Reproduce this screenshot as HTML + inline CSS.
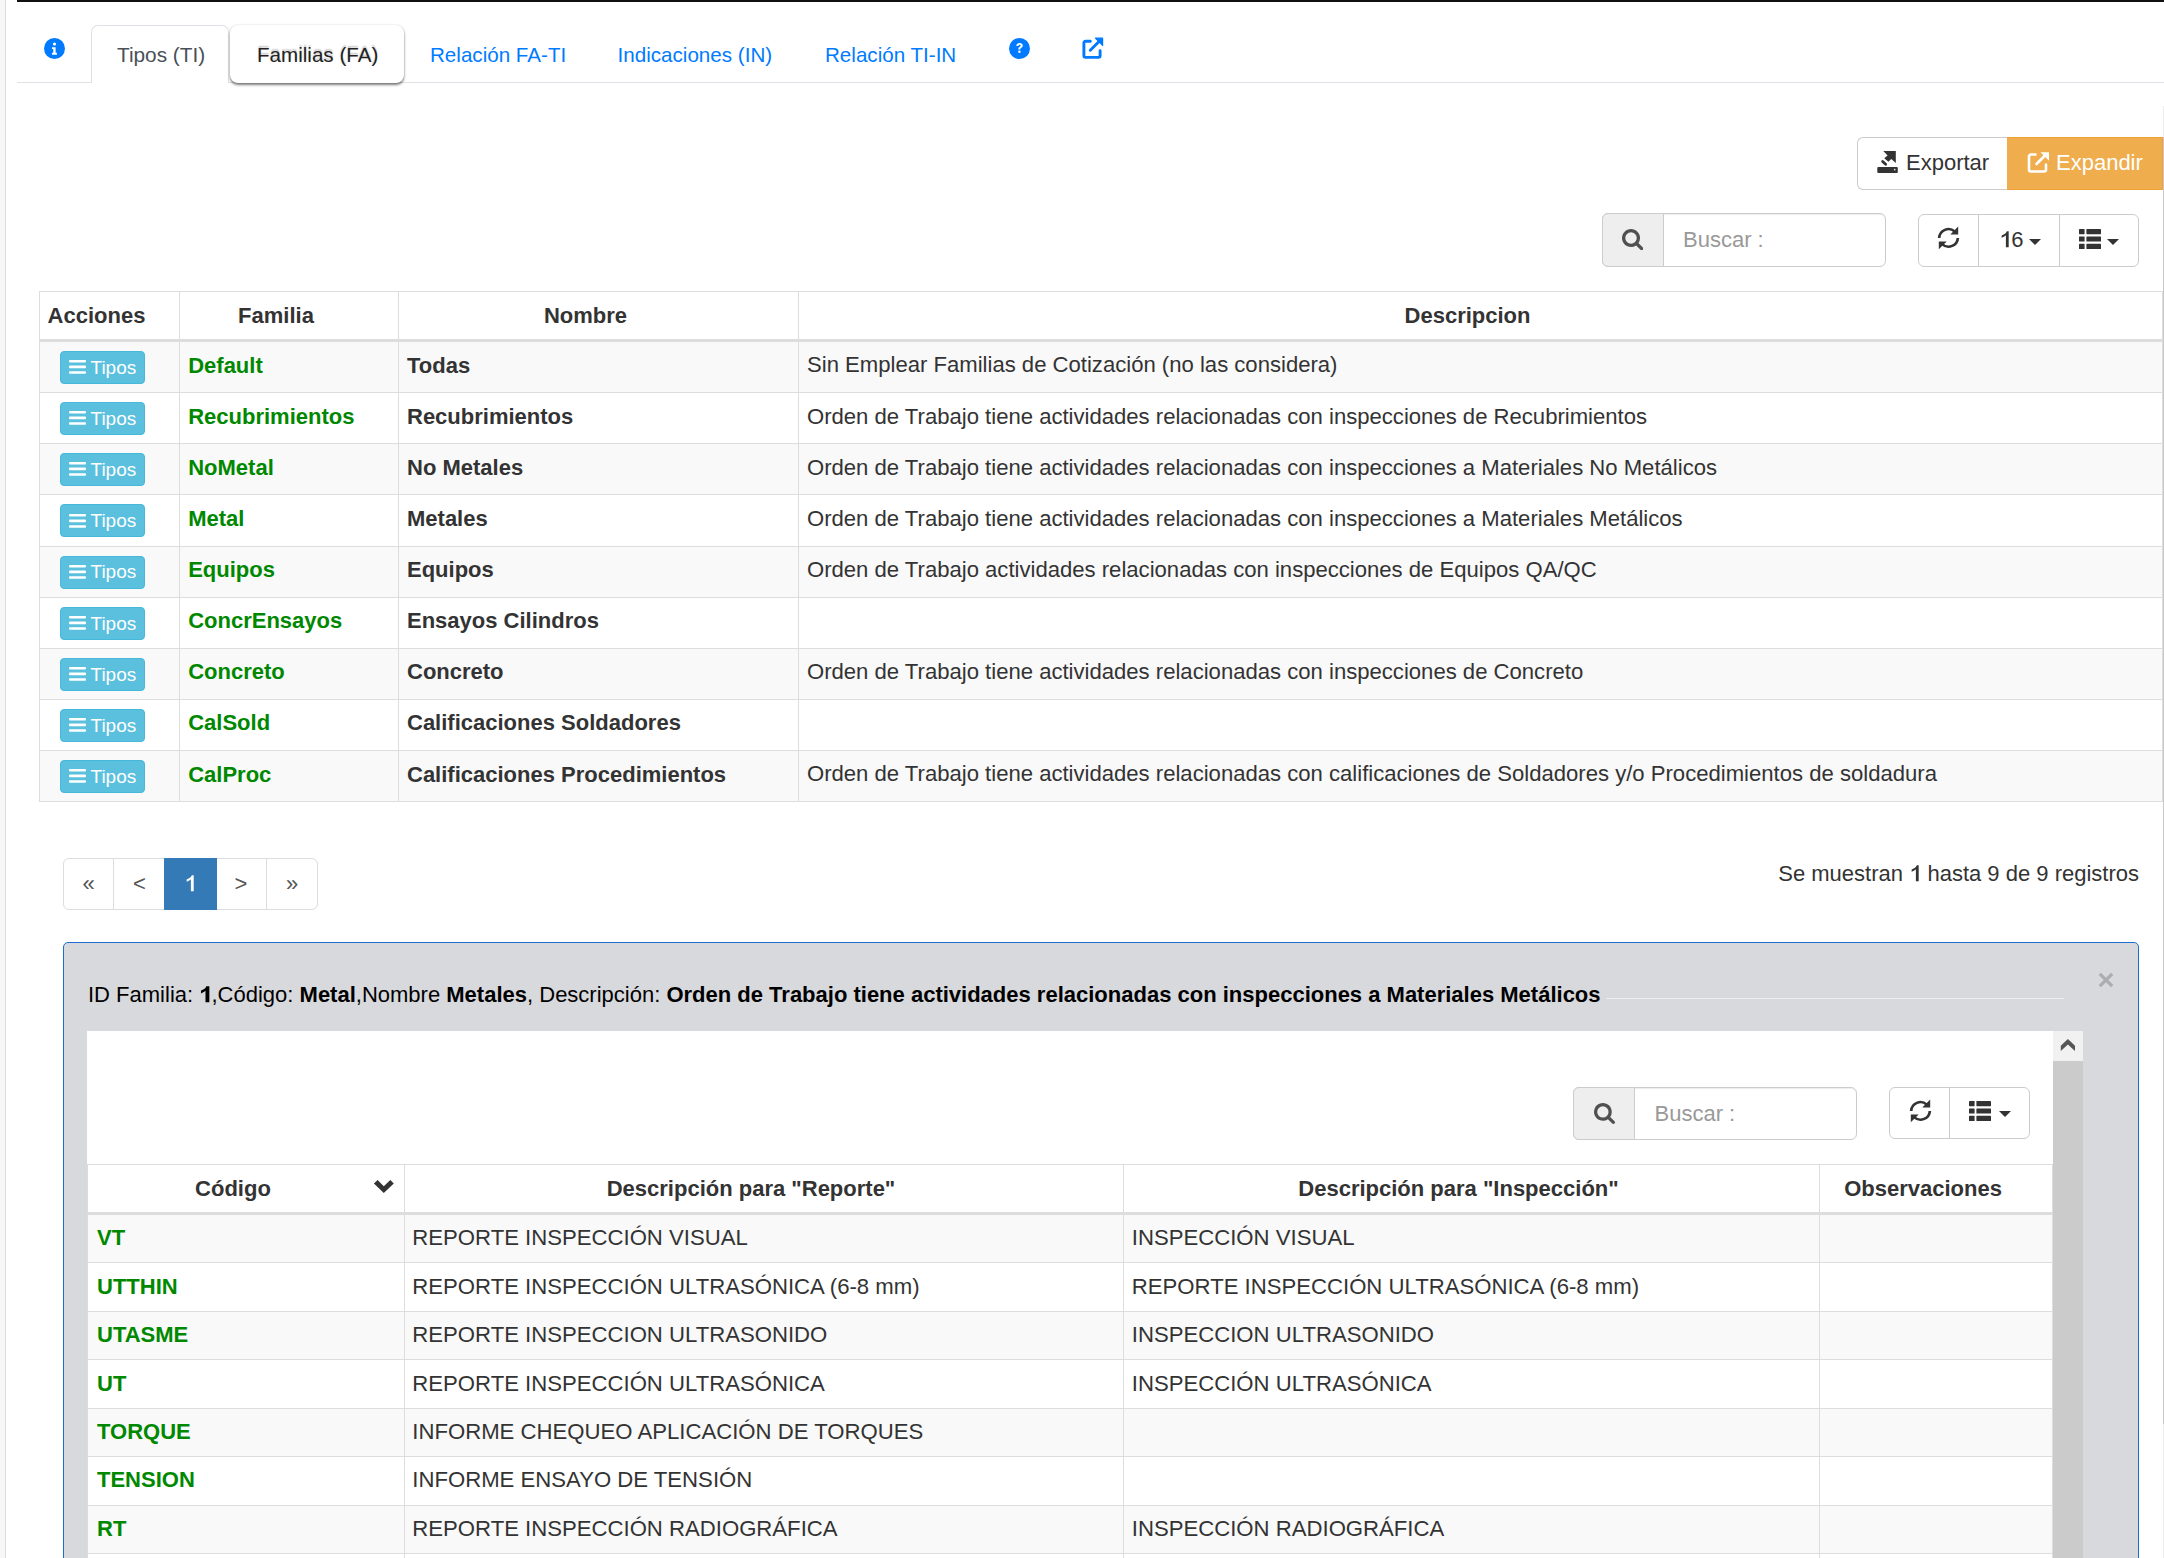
<!DOCTYPE html>
<html><head><meta charset="utf-8"><style>
html,body{margin:0;padding:0;width:2164px;height:1558px;overflow:hidden;background:#fff;position:relative}
body{font-family:"Liberation Sans",sans-serif}
.t{position:absolute;white-space:nowrap;line-height:1}
.r{position:absolute}
</style></head><body>
<div class=r style='left:0px;top:0px;width:5px;height:1558px;background:#f7f7f7'></div>
<div class=r style='left:5px;top:0px;width:1px;height:1558px;background:#dedede'></div>
<div class=r style='left:17px;top:0px;width:2147px;height:2px;background:#111'></div>
<div class=r style='left:2163px;top:106px;width:1px;height:31px;background:#ececec'></div>
<div class=r style='left:2163px;top:137px;width:1px;height:1287px;background:#c8c8c8'></div>
<div class=r style='left:2163px;top:1424px;width:1px;height:134px;background:#ececec'></div>
<div class=r style='left:17px;top:82px;width:2147px;height:1px;background:#dee2e6'></div>
<svg class=r style='left:44px;top:37.5px' width=21 height=21 viewBox='0 0 21 21'><circle cx=10.5 cy=10.5 r=10.5 fill='#007bff'/>
<circle cx=10.5 cy=6 r=1.6 fill='#fff'/><path d='M8 9.2h3.6v5.6h1.3v1.9H8v-1.9h1.3v-3.7H8z' fill='#fff'/></svg>
<div class=r style='left:91px;top:25px;width:138px;height:58px;background:#fff;border:1px solid #dee2e6;border-bottom:none;border-radius:7px 7px 0 0;box-sizing:border-box'></div>
<div class=t style='left:117px;top:44.99px;font-size:20.8px;color:#495057;font-weight:normal;'>Tipos (TI)</div>
<div class=r style='left:230px;top:24.5px;width:174px;height:58px;background:#fff;border-radius:8px;box-shadow:0 2px 2.5px rgba(0,0,0,.5), 0 0 2px rgba(0,0,0,.15)'></div>
<div class=t style='left:257px;top:45.16px;font-size:20.6px;color:#222;font-weight:normal;text-shadow:0 -2px 1.5px rgba(0,0,0,.22)'>Familias (FA)</div>
<div class=t style='left:430px;top:44.86px;font-size:20.6px;color:#007bff;font-weight:normal;'>Relación FA-TI</div>
<div class=t style='left:617.6px;top:44.86px;font-size:20.6px;color:#007bff;font-weight:normal;'>Indicaciones (IN)</div>
<div class=t style='left:825px;top:44.86px;font-size:20.6px;color:#007bff;font-weight:normal;'>Relación TI-IN</div>
<svg class=r style='left:1008.5px;top:37.5px' width=21 height=21 viewBox='0 0 21 21'><circle cx=10.5 cy=10.5 r=10.5 fill='#007bff'/>
<path d='M7.4 7.9c0-1.9 1.4-3 3.2-3s3.2 1.1 3.2 2.7c0 1.4-.9 2-1.8 2.5-.5.3-.7.5-.7 1v.4h-1.9v-.6c0-1.1.6-1.6 1.4-2.1.6-.4.9-.6.9-1.1 0-.6-.5-1-1.1-1s-1.2.4-1.2 1.2z' fill='#fff'/><rect x=9.3 y=12.6 width=2.2 height=2.2 fill='#fff'/></svg>
<svg class=r style='left:1082px;top:37.5px;overflow:visible' width=21 height=21 viewBox='0 0 21 21'>
<path d='M8.3 3.2H3.5a1.6 1.6 0 0 0-1.6 1.6v13a1.6 1.6 0 0 0 1.6 1.6h13a1.6 1.6 0 0 0 1.6-1.6V12.7' fill='none' stroke='#007bff' stroke-width='2.9' stroke-linecap='round'/>
<path d='M8.3 12.3 17.3 3.3' fill='none' stroke='#007bff' stroke-width='2.9' stroke-linecap='round'/>
<path d='M13.4 .2h7.2v7.2z' fill='#007bff' stroke='#007bff' stroke-width='1.2' stroke-linejoin='round'/></svg>
<div class=r style='left:1857px;top:137px;width:150px;height:53px;background:#fff;border:1px solid #ccc;border-right:none;border-radius:6px 0 0 6px;box-sizing:border-box'></div>
<svg class=r style='left:1870px;top:145px' width=35 height=35 viewBox='0 0 35 35'>
<path d='M13.3 6H25.8V17.9L21.3 14L18.4 16.8L14.2 13.3L17.6 10.4z' fill='#333'/>
<path d='M12.6 16.4 15.7 19.3' stroke='#333' stroke-width='2.7' stroke-linecap='round'/>
<rect x=7.3 y=22 width=20.5 height=5.9 rx=1 fill='#333'/><circle cx=24.7 cy=24.6 r=.9 fill='#ddd'/></svg>
<div class=t style='left:1906px;top:152.38px;font-size:22px;color:#333;font-weight:normal;'>Exportar</div>
<div class=r style='left:2007px;top:137px;width:156px;height:53px;background:#f0ad4e;border:1px solid #eea236;border-left:none;box-sizing:border-box'></div>
<svg class=r style='left:2026.8px;top:150.6px' width=23 height=23 viewBox='0 0 23 23'>
<path d='M8.5 3.5H4a2 2 0 0 0-2 2v13a2 2 0 0 0 2 2h13a2 2 0 0 0 2-2v-5' fill='none' stroke='#fff' stroke-width='2.6' stroke-linecap='round'/>
<path d='M9.5 13 19 3.5' fill='none' stroke='#fff' stroke-width='2.6' stroke-linecap='round'/>
<path d='M13.5 1.2h8.5v8.5z' fill='#fff'/></svg>
<div class=t style='left:2056px;top:152.38px;font-size:22px;color:#fff;font-weight:normal;'>Expandir</div>
<div class=r style='left:1602px;top:213px;width:284px;height:54px;background:#fff;border:1px solid #ccc;border-radius:6px;box-sizing:border-box;box-shadow:inset 0 1px 1px rgba(0,0,0,.075)'></div>
<div class=r style='left:1602px;top:213px;width:62px;height:54px;background:#eee;border:1px solid #ccc;border-radius:6px 0 0 6px;box-sizing:border-box'></div>
<svg class=r style='left:1622px;top:229px' width=21.3 height=21.3 viewBox='0 0 1664 1664'>
<path d='M1152 704q0-185-131.5-316.5t-316.5-131.5-316.5 131.5-131.5 316.5 131.5 316.5 316.5 131.5 316.5-131.5 131.5-316.5zm512 832q0 52-38 90t-90 38q-54 0-90-38l-343-342q-179 124-399 124-143 0-273.5-55.5t-225-150-150-225-55.5-273.5 55.5-273.5 150-225 225-150 273.5-55.5 273.5 55.5 225 150 150 225 55.5 273.5q0 220-124 399l343 343q37 37 37 90z' fill='#505050'/></svg>
<div class=t style='left:1683px;top:229.38px;font-size:22px;color:#999;font-weight:normal;'>Buscar :</div>
<div class=r style='left:1918px;top:214px;width:221px;height:53px;background:#fff;border:1px solid #ccc;border-radius:6px;box-sizing:border-box'></div>
<div class=r style='left:1978px;top:214px;width:1px;height:53px;background:#ccc'></div>
<div class=r style='left:2059px;top:214px;width:1px;height:53px;background:#ccc'></div>
<svg class=r style='left:1925px;top:220px' width=45 height=35 viewBox='0 0 45 35'><g fill='#333'><path d='M12.80 17.90A10.7 10.7 0 0 1 30.5 10.5L28.8 12.4A8.0 8.0 0 0 0 15.50 17.90Z'/><path d='M25.3 14.4H33.2V6.6Z'/><path d='M34.20 17.90A10.7 10.7 0 0 1 16.5 25.3L18.2 23.4A8.0 8.0 0 0 0 31.50 17.90Z'/><path d='M21.7 21.4H13.8V29.2Z'/></g></svg>
<div class=t style='left:1999px;top:229.08px;font-size:22px;color:#333;font-weight:normal;'><span style='position:relative;color:transparent'>1<svg style='position:absolute;left:0;top:0;width:100%;height:100%' viewBox='0 0 556 1117' preserveAspectRatio='none'><path d='M313 905H440V189H358C340 240 290 290 230 325C185 352 150 368 120 378V478C165 462 230 430 275 400C295 387 305 377 313 368Z' fill='#333'/></svg></span>6</div>
<svg class=r style='left:2029px;top:239px' width=12 height=6 viewBox='0 0 12 6'><path d='M0 0h12L6 6z' fill='#333'/></svg>
<svg class=r style='left:2078.8px;top:228.8px' width=23 height=20 viewBox='0 0 23 20'>
<rect x=0 y=0 width=5.6 height=5.2 rx=.6 fill='#333'/><rect x=7.4 y=0 width=14.6 height=5.2 rx=.6 fill='#333'/>
<rect x=0 y=7.5 width=5.6 height=5.1 rx=.6 fill='#333'/><rect x=7.4 y=7.5 width=14.6 height=5.1 rx=.6 fill='#333'/>
<rect x=0 y=14.8 width=5.6 height=5.2 rx=.6 fill='#333'/><rect x=7.4 y=14.8 width=14.6 height=5.2 rx=.6 fill='#333'/></svg>
<svg class=r style='left:2107px;top:239px' width=12 height=6 viewBox='0 0 12 6'><path d='M0 0h12L6 6z' fill='#333'/></svg>
<div class=r style='left:39px;top:291px;width:2124px;height:1px;background:#ddd'></div>
<div class=r style='left:39px;top:339px;width:2124px;height:3px;background:#ddd'></div>
<div class=r style='left:39px;top:342.0px;width:2124px;height:50.125px;background:#f9f9f9'></div>
<div class=r style='left:39px;top:392.125px;width:2124px;height:1px;background:#ddd'></div>
<div class=r style='left:60px;top:351.1px;width:85px;height:33px;background:#5bc0de;border:1px solid #46b8da;border-radius:4px;box-sizing:border-box'></div>
<svg class=r style='left:69px;top:360.20px' width=17 height=14 viewBox='0 0 17 14'><rect y=0 width=17 height=2.6 rx=1 fill='#fff'/><rect y=5.6 width=17 height=2.6 rx=1 fill='#fff'/><rect y=11.2 width=17 height=2.6 rx=1 fill='#fff'/></svg>
<div class=t style='left:90.5px;top:357.92px;font-size:19px;color:#fff;font-weight:normal;'>Tipos</div>
<div class=t style='left:188.2px;top:354.58px;font-size:22px;color:#008800;font-weight:bold;'>Default</div>
<div class=t style='left:407px;top:354.58px;font-size:22px;color:#333;font-weight:bold;'>Todas</div>
<div class=t style='left:807px;top:354.49px;font-size:22.1px;color:#333;font-weight:normal;'>Sin Emplear Familias de Cotización (no las considera)</div>
<div class=r style='left:39px;top:443.25px;width:2124px;height:1px;background:#ddd'></div>
<div class=r style='left:60px;top:402.225px;width:85px;height:33px;background:#5bc0de;border:1px solid #46b8da;border-radius:4px;box-sizing:border-box'></div>
<svg class=r style='left:69px;top:411.32px' width=17 height=14 viewBox='0 0 17 14'><rect y=0 width=17 height=2.6 rx=1 fill='#fff'/><rect y=5.6 width=17 height=2.6 rx=1 fill='#fff'/><rect y=11.2 width=17 height=2.6 rx=1 fill='#fff'/></svg>
<div class=t style='left:90.5px;top:409.04px;font-size:19px;color:#fff;font-weight:normal;'>Tipos</div>
<div class=t style='left:188.2px;top:405.70px;font-size:22px;color:#008800;font-weight:bold;'>Recubrimientos</div>
<div class=t style='left:407px;top:405.70px;font-size:22px;color:#333;font-weight:bold;'>Recubrimientos</div>
<div class=t style='left:807px;top:405.62px;font-size:22.1px;color:#333;font-weight:normal;'>Orden de Trabajo tiene actividades relacionadas con inspecciones de Recubrimientos</div>
<div class=r style='left:39px;top:444.25px;width:2124px;height:50.125px;background:#f9f9f9'></div>
<div class=r style='left:39px;top:494.375px;width:2124px;height:1px;background:#ddd'></div>
<div class=r style='left:60px;top:453.35px;width:85px;height:33px;background:#5bc0de;border:1px solid #46b8da;border-radius:4px;box-sizing:border-box'></div>
<svg class=r style='left:69px;top:462.45px' width=17 height=14 viewBox='0 0 17 14'><rect y=0 width=17 height=2.6 rx=1 fill='#fff'/><rect y=5.6 width=17 height=2.6 rx=1 fill='#fff'/><rect y=11.2 width=17 height=2.6 rx=1 fill='#fff'/></svg>
<div class=t style='left:90.5px;top:460.17px;font-size:19px;color:#fff;font-weight:normal;'>Tipos</div>
<div class=t style='left:188.2px;top:456.83px;font-size:22px;color:#008800;font-weight:bold;'>NoMetal</div>
<div class=t style='left:407px;top:456.83px;font-size:22px;color:#333;font-weight:bold;'>No Metales</div>
<div class=t style='left:807px;top:456.74px;font-size:22.1px;color:#333;font-weight:normal;'>Orden de Trabajo tiene actividades relacionadas con inspecciones a Materiales No Metálicos</div>
<div class=r style='left:39px;top:545.5px;width:2124px;height:1px;background:#ddd'></div>
<div class=r style='left:60px;top:504.475px;width:85px;height:33px;background:#5bc0de;border:1px solid #46b8da;border-radius:4px;box-sizing:border-box'></div>
<svg class=r style='left:69px;top:513.58px' width=17 height=14 viewBox='0 0 17 14'><rect y=0 width=17 height=2.6 rx=1 fill='#fff'/><rect y=5.6 width=17 height=2.6 rx=1 fill='#fff'/><rect y=11.2 width=17 height=2.6 rx=1 fill='#fff'/></svg>
<div class=t style='left:90.5px;top:511.29px;font-size:19px;color:#fff;font-weight:normal;'>Tipos</div>
<div class=t style='left:188.2px;top:507.95px;font-size:22px;color:#008800;font-weight:bold;'>Metal</div>
<div class=t style='left:407px;top:507.95px;font-size:22px;color:#333;font-weight:bold;'>Metales</div>
<div class=t style='left:807px;top:507.87px;font-size:22.1px;color:#333;font-weight:normal;'>Orden de Trabajo tiene actividades relacionadas con inspecciones a Materiales Metálicos</div>
<div class=r style='left:39px;top:546.5px;width:2124px;height:50.125px;background:#f9f9f9'></div>
<div class=r style='left:39px;top:596.625px;width:2124px;height:1px;background:#ddd'></div>
<div class=r style='left:60px;top:555.6px;width:85px;height:33px;background:#5bc0de;border:1px solid #46b8da;border-radius:4px;box-sizing:border-box'></div>
<svg class=r style='left:69px;top:564.70px' width=17 height=14 viewBox='0 0 17 14'><rect y=0 width=17 height=2.6 rx=1 fill='#fff'/><rect y=5.6 width=17 height=2.6 rx=1 fill='#fff'/><rect y=11.2 width=17 height=2.6 rx=1 fill='#fff'/></svg>
<div class=t style='left:90.5px;top:562.42px;font-size:19px;color:#fff;font-weight:normal;'>Tipos</div>
<div class=t style='left:188.2px;top:559.08px;font-size:22px;color:#008800;font-weight:bold;'>Equipos</div>
<div class=t style='left:407px;top:559.08px;font-size:22px;color:#333;font-weight:bold;'>Equipos</div>
<div class=t style='left:807px;top:558.99px;font-size:22.1px;color:#333;font-weight:normal;'>Orden de Trabajo actividades relacionadas con inspecciones de Equipos QA/QC</div>
<div class=r style='left:39px;top:647.75px;width:2124px;height:1px;background:#ddd'></div>
<div class=r style='left:60px;top:606.725px;width:85px;height:33px;background:#5bc0de;border:1px solid #46b8da;border-radius:4px;box-sizing:border-box'></div>
<svg class=r style='left:69px;top:615.83px' width=17 height=14 viewBox='0 0 17 14'><rect y=0 width=17 height=2.6 rx=1 fill='#fff'/><rect y=5.6 width=17 height=2.6 rx=1 fill='#fff'/><rect y=11.2 width=17 height=2.6 rx=1 fill='#fff'/></svg>
<div class=t style='left:90.5px;top:613.54px;font-size:19px;color:#fff;font-weight:normal;'>Tipos</div>
<div class=t style='left:188.2px;top:610.20px;font-size:22px;color:#008800;font-weight:bold;'>ConcrEnsayos</div>
<div class=t style='left:407px;top:610.20px;font-size:22px;color:#333;font-weight:bold;'>Ensayos Cilindros</div>
<div class=r style='left:39px;top:648.75px;width:2124px;height:50.125px;background:#f9f9f9'></div>
<div class=r style='left:39px;top:698.875px;width:2124px;height:1px;background:#ddd'></div>
<div class=r style='left:60px;top:657.85px;width:85px;height:33px;background:#5bc0de;border:1px solid #46b8da;border-radius:4px;box-sizing:border-box'></div>
<svg class=r style='left:69px;top:666.95px' width=17 height=14 viewBox='0 0 17 14'><rect y=0 width=17 height=2.6 rx=1 fill='#fff'/><rect y=5.6 width=17 height=2.6 rx=1 fill='#fff'/><rect y=11.2 width=17 height=2.6 rx=1 fill='#fff'/></svg>
<div class=t style='left:90.5px;top:664.67px;font-size:19px;color:#fff;font-weight:normal;'>Tipos</div>
<div class=t style='left:188.2px;top:661.33px;font-size:22px;color:#008800;font-weight:bold;'>Concreto</div>
<div class=t style='left:407px;top:661.33px;font-size:22px;color:#333;font-weight:bold;'>Concreto</div>
<div class=t style='left:807px;top:661.24px;font-size:22.1px;color:#333;font-weight:normal;'>Orden de Trabajo tiene actividades relacionadas con inspecciones de Concreto</div>
<div class=r style='left:39px;top:750.0px;width:2124px;height:1px;background:#ddd'></div>
<div class=r style='left:60px;top:708.975px;width:85px;height:33px;background:#5bc0de;border:1px solid #46b8da;border-radius:4px;box-sizing:border-box'></div>
<svg class=r style='left:69px;top:718.08px' width=17 height=14 viewBox='0 0 17 14'><rect y=0 width=17 height=2.6 rx=1 fill='#fff'/><rect y=5.6 width=17 height=2.6 rx=1 fill='#fff'/><rect y=11.2 width=17 height=2.6 rx=1 fill='#fff'/></svg>
<div class=t style='left:90.5px;top:715.79px;font-size:19px;color:#fff;font-weight:normal;'>Tipos</div>
<div class=t style='left:188.2px;top:712.45px;font-size:22px;color:#008800;font-weight:bold;'>CalSold</div>
<div class=t style='left:407px;top:712.45px;font-size:22px;color:#333;font-weight:bold;'>Calificaciones Soldadores</div>
<div class=r style='left:39px;top:751.0px;width:2124px;height:50.125px;background:#f9f9f9'></div>
<div class=r style='left:39px;top:801.125px;width:2124px;height:1px;background:#ddd'></div>
<div class=r style='left:60px;top:760.1px;width:85px;height:33px;background:#5bc0de;border:1px solid #46b8da;border-radius:4px;box-sizing:border-box'></div>
<svg class=r style='left:69px;top:769.20px' width=17 height=14 viewBox='0 0 17 14'><rect y=0 width=17 height=2.6 rx=1 fill='#fff'/><rect y=5.6 width=17 height=2.6 rx=1 fill='#fff'/><rect y=11.2 width=17 height=2.6 rx=1 fill='#fff'/></svg>
<div class=t style='left:90.5px;top:766.92px;font-size:19px;color:#fff;font-weight:normal;'>Tipos</div>
<div class=t style='left:188.2px;top:763.58px;font-size:22px;color:#008800;font-weight:bold;'>CalProc</div>
<div class=t style='left:407px;top:763.58px;font-size:22px;color:#333;font-weight:bold;'>Calificaciones Procedimientos</div>
<div class=t style='left:807px;top:763.49px;font-size:22.1px;color:#333;font-weight:normal;'>Orden de Trabajo tiene actividades relacionadas con calificaciones de Soldadores y/o Procedimientos de soldadura</div>
<div class=r style='left:39px;top:291px;width:1px;height:511.20000000000005px;background:#ddd'></div>
<div class=r style='left:179px;top:291px;width:1px;height:511.20000000000005px;background:#ddd'></div>
<div class=r style='left:398px;top:291px;width:1px;height:511.20000000000005px;background:#ddd'></div>
<div class=r style='left:798px;top:291px;width:1px;height:511.20000000000005px;background:#ddd'></div>
<div class=r style='left:2162px;top:291px;width:1px;height:511.20000000000005px;background:#ddd'></div>
<div class=t style='left:-403.5px;width:1000px;text-align:center;top:304.68px;font-size:22px;color:#333;font-weight:bold;'>Acciones</div>
<div class=t style='left:-224.0px;width:1000px;text-align:center;top:304.68px;font-size:22px;color:#333;font-weight:bold;'>Familia</div>
<div class=t style='left:85.5px;width:1000px;text-align:center;top:304.68px;font-size:22px;color:#333;font-weight:bold;'>Nombre</div>
<div class=t style='left:967.5px;width:1000px;text-align:center;top:304.68px;font-size:22px;color:#333;font-weight:bold;'>Descripcion</div>
<div class=r style='left:63px;top:858px;width:255px;height:52px;background:#fff;border:1px solid #ddd;border-radius:6px;box-sizing:border-box'></div>
<div class=r style='left:113px;top:858px;width:1px;height:52px;background:#ddd'></div>
<div class=r style='left:266px;top:858px;width:1px;height:52px;background:#ddd'></div>
<div class=r style='left:164px;top:858px;width:53px;height:52px;background:#337ab7'></div>
<div class=t style='left:-411.5px;width:1000px;text-align:center;top:873.38px;font-size:22px;color:#555;font-weight:normal;'>«</div>
<div class=t style='left:-360.5px;width:1000px;text-align:center;top:873.38px;font-size:22px;color:#555;font-weight:normal;'>&lt;</div>
<div class=t style='left:-310px;width:1000px;text-align:center;top:872.68px;font-size:22px;color:#fff;font-weight:normal;'><span style='position:relative;color:transparent'>1<svg style='position:absolute;left:0;top:0;width:100%;height:100%' viewBox='0 0 556 1117' preserveAspectRatio='none'><path d='M313 905H440V189H358C340 240 290 290 230 325C185 352 150 368 120 378V478C165 462 230 430 275 400C295 387 305 377 313 368Z' fill='#fff'/></svg></span></div>
<div class=t style='left:-259px;width:1000px;text-align:center;top:873.38px;font-size:22px;color:#555;font-weight:normal;'>&gt;</div>
<div class=t style='left:-208px;width:1000px;text-align:center;top:873.38px;font-size:22px;color:#555;font-weight:normal;'>»</div>
<div class=t style='left:1139px;width:1000px;text-align:right;top:862.78px;font-size:22px;color:#333;font-weight:normal;'>Se muestran <span style='position:relative;color:transparent'>1<svg style='position:absolute;left:0;top:0;width:100%;height:100%' viewBox='0 0 556 1117' preserveAspectRatio='none'><path d='M313 905H440V189H358C340 240 290 290 230 325C185 352 150 368 120 378V478C165 462 230 430 275 400C295 387 305 377 313 368Z' fill='#333'/></svg></span> hasta 9 de 9 registros</div>
<div class=r style='left:63px;top:942px;width:2076px;height:700px;background:#d8d9dc;border:1px solid #1c6fd0;border-radius:5px;box-sizing:border-box'></div>
<div class=t style='left:88px;top:984.38px;font-size:22px;color:#000;font-weight:normal;'>ID Familia: <b><span style='position:relative;color:transparent'>1<svg style='position:absolute;left:0;top:0;width:100%;height:100%' viewBox='0 0 556 1117' preserveAspectRatio='none'><path d='M295 905H470V189H335C318 240 270 290 210 325C165 352 125 370 90 382V510C140 492 210 455 255 425C272 413 285 402 295 392Z' fill='#000'/></svg></span></b>,Código: <b>Metal</b>,Nombre <b>Metales</b>, Descripción: <b>Orden de Trabajo tiene actividades relacionadas con inspecciones a Materiales Metálicos</b></div>
<div class=r style='left:1606px;top:998px;width:458px;height:1px;background:#eee'></div>
<svg class=r style='left:2098.3px;top:972.3px' width=16 height=16 viewBox='0 0 16 16'><path d='M1.8 1.8 14.2 14.2M14.2 1.8 1.8 14.2' stroke='#abadaf' stroke-width='3.3'/></svg>
<div class=r style='left:87px;top:1031px;width:1966px;height:600px;background:#fff'></div>
<div class=r style='left:2053px;top:1031px;width:30px;height:600px;background:#cbcbcb'></div>
<div class=r style='left:2053px;top:1031px;width:30px;height:30px;background:#f1f1f1'></div>
<svg class=r style='left:2060px;top:1038px' width=16 height=14 viewBox='0 0 16 14'><path d='M.8 7.8 7.9 1.1 15 7.8V13.1L7.9 6.4.8 13.1z' fill='#555'/></svg>
<div class=r style='left:1573px;top:1087px;width:284px;height:53px;background:#fff;border:1px solid #ccc;border-radius:6px;box-sizing:border-box;box-shadow:inset 0 1px 1px rgba(0,0,0,.075)'></div>
<div class=r style='left:1573px;top:1087px;width:62px;height:53px;background:#eee;border:1px solid #ccc;border-radius:6px 0 0 6px;box-sizing:border-box'></div>
<svg class=r style='left:1593.6px;top:1102.8px' width=21 height=21 viewBox='0 0 1664 1664'>
<path d='M1152 704q0-185-131.5-316.5t-316.5-131.5-316.5 131.5-131.5 316.5 131.5 316.5 316.5 131.5 316.5-131.5 131.5-316.5zm512 832q0 52-38 90t-90 38q-54 0-90-38l-343-342q-179 124-399 124-143 0-273.5-55.5t-225-150-150-225-55.5-273.5 55.5-273.5 150-225 225-150 273.5-55.5 273.5 55.5 225 150 150 225 55.5 273.5q0 220-124 399l343 343q37 37 37 90z' fill='#505050'/></svg>
<div class=t style='left:1654.5px;top:1102.68px;font-size:22px;color:#999;font-weight:normal;'>Buscar :</div>
<div class=r style='left:1889px;top:1087px;width:141px;height:52px;background:#fff;border:1px solid #ccc;border-radius:6px;box-sizing:border-box'></div>
<div class=r style='left:1949px;top:1087px;width:1px;height:52px;background:#ccc'></div>
<svg class=r style='left:1896.6px;top:1093.4px' width=45 height=35 viewBox='0 0 45 35'><g fill='#333'><path d='M12.80 17.90A10.7 10.7 0 0 1 30.5 10.5L28.8 12.4A8.0 8.0 0 0 0 15.50 17.90Z'/><path d='M25.3 14.4H33.2V6.6Z'/><path d='M34.20 17.90A10.7 10.7 0 0 1 16.5 25.3L18.2 23.4A8.0 8.0 0 0 0 31.50 17.90Z'/><path d='M21.7 21.4H13.8V29.2Z'/></g></svg>
<svg class=r style='left:1969px;top:1101px' width=23 height=20 viewBox='0 0 23 20'>
<rect x=0 y=0 width=5.6 height=5.2 rx=.6 fill='#333'/><rect x=7.4 y=0 width=14.6 height=5.2 rx=.6 fill='#333'/>
<rect x=0 y=7.5 width=5.6 height=5.1 rx=.6 fill='#333'/><rect x=7.4 y=7.5 width=14.6 height=5.1 rx=.6 fill='#333'/>
<rect x=0 y=14.8 width=5.6 height=5.2 rx=.6 fill='#333'/><rect x=7.4 y=14.8 width=14.6 height=5.2 rx=.6 fill='#333'/></svg>
<svg class=r style='left:1998.5px;top:1110.5px' width=12 height=6 viewBox='0 0 12 6'><path d='M0 0h12L6 6z' fill='#333'/></svg>
<div class=r style='left:87px;top:1164px;width:1966px;height:1px;background:#ddd'></div>
<div class=r style='left:87px;top:1212px;width:1966px;height:3px;background:#ddd'></div>
<div class=r style='left:87px;top:1215.0px;width:1966px;height:47.42px;background:#f9f9f9'></div>
<div class=r style='left:87px;top:1262.42px;width:1966px;height:1px;background:#ddd'></div>
<div class=t style='left:97px;top:1227.38px;font-size:22px;color:#008800;font-weight:bold;'>VT</div>
<div class=t style='left:412.3px;top:1227.25px;font-size:22.15px;color:#333;font-weight:normal;'>REPORTE INSPECCIÓN VISUAL</div>
<div class=t style='left:1131.8px;top:1227.25px;font-size:22.15px;color:#333;font-weight:normal;'>INSPECCIÓN VISUAL</div>
<div class=r style='left:87px;top:1310.8400000000001px;width:1966px;height:1px;background:#ddd'></div>
<div class=t style='left:97px;top:1275.80px;font-size:22px;color:#008800;font-weight:bold;'>UTTHIN</div>
<div class=t style='left:412.3px;top:1275.67px;font-size:22.15px;color:#333;font-weight:normal;'>REPORTE INSPECCIÓN ULTRASÓNICA (6-8 mm)</div>
<div class=t style='left:1131.8px;top:1275.67px;font-size:22.15px;color:#333;font-weight:normal;'>REPORTE INSPECCIÓN ULTRASÓNICA (6-8 mm)</div>
<div class=r style='left:87px;top:1311.84px;width:1966px;height:47.42px;background:#f9f9f9'></div>
<div class=r style='left:87px;top:1359.26px;width:1966px;height:1px;background:#ddd'></div>
<div class=t style='left:97px;top:1324.22px;font-size:22px;color:#008800;font-weight:bold;'>UTASME</div>
<div class=t style='left:412.3px;top:1324.09px;font-size:22.15px;color:#333;font-weight:normal;'>REPORTE INSPECCION ULTRASONIDO</div>
<div class=t style='left:1131.8px;top:1324.09px;font-size:22.15px;color:#333;font-weight:normal;'>INSPECCION ULTRASONIDO</div>
<div class=r style='left:87px;top:1407.68px;width:1966px;height:1px;background:#ddd'></div>
<div class=t style='left:97px;top:1372.64px;font-size:22px;color:#008800;font-weight:bold;'>UT</div>
<div class=t style='left:412.3px;top:1372.51px;font-size:22.15px;color:#333;font-weight:normal;'>REPORTE INSPECCIÓN ULTRASÓNICA</div>
<div class=t style='left:1131.8px;top:1372.51px;font-size:22.15px;color:#333;font-weight:normal;'>INSPECCIÓN ULTRASÓNICA</div>
<div class=r style='left:87px;top:1408.68px;width:1966px;height:47.42px;background:#f9f9f9'></div>
<div class=r style='left:87px;top:1456.1000000000001px;width:1966px;height:1px;background:#ddd'></div>
<div class=t style='left:97px;top:1421.06px;font-size:22px;color:#008800;font-weight:bold;'>TORQUE</div>
<div class=t style='left:412.3px;top:1420.93px;font-size:22.15px;color:#333;font-weight:normal;'>INFORME CHEQUEO APLICACIÓN DE TORQUES</div>
<div class=r style='left:87px;top:1504.52px;width:1966px;height:1px;background:#ddd'></div>
<div class=t style='left:97px;top:1469.48px;font-size:22px;color:#008800;font-weight:bold;'>TENSION</div>
<div class=t style='left:412.3px;top:1469.35px;font-size:22.15px;color:#333;font-weight:normal;'>INFORME ENSAYO DE TENSIÓN</div>
<div class=r style='left:87px;top:1505.52px;width:1966px;height:47.42px;background:#f9f9f9'></div>
<div class=r style='left:87px;top:1552.94px;width:1966px;height:1px;background:#ddd'></div>
<div class=t style='left:97px;top:1517.90px;font-size:22px;color:#008800;font-weight:bold;'>RT</div>
<div class=t style='left:412.3px;top:1517.77px;font-size:22.15px;color:#333;font-weight:normal;'>REPORTE INSPECCIÓN RADIOGRÁFICA</div>
<div class=t style='left:1131.8px;top:1517.77px;font-size:22.15px;color:#333;font-weight:normal;'>INSPECCIÓN RADIOGRÁFICA</div>
<div class=r style='left:87px;top:1601.3600000000001px;width:1966px;height:1px;background:#ddd'></div>
<div class=t style='left:97px;top:1566.32px;font-size:22px;color:#008800;font-weight:bold;'>PT</div>
<div class=t style='left:412.3px;top:1566.19px;font-size:22.15px;color:#333;font-weight:normal;'>REPORTE INSPECCIÓN TINTAS PENETRANTES</div>
<div class=t style='left:1131.8px;top:1566.19px;font-size:22.15px;color:#333;font-weight:normal;'>INSPECCIÓN TINTAS PENETRANTES</div>
<div class=r style='left:87px;top:1164px;width:1px;height:500px;background:#ddd'></div>
<div class=r style='left:404px;top:1164px;width:1px;height:500px;background:#ddd'></div>
<div class=r style='left:1123px;top:1164px;width:1px;height:500px;background:#ddd'></div>
<div class=r style='left:1819px;top:1164px;width:1px;height:500px;background:#ddd'></div>
<div class=r style='left:2052px;top:1164px;width:1px;height:500px;background:#ddd'></div>
<div class=t style='left:-267.0px;width:1000px;text-align:center;top:1178.28px;font-size:22px;color:#333;font-weight:bold;'>Código</div>
<div class=t style='left:251.0px;width:1000px;text-align:center;top:1178.28px;font-size:22px;color:#333;font-weight:bold;'>Descripción para "Reporte"</div>
<div class=t style='left:958.5px;width:1000px;text-align:center;top:1178.28px;font-size:22px;color:#333;font-weight:bold;'>Descripción para "Inspección"</div>
<div class=t style='left:1423.0px;width:1000px;text-align:center;top:1178.28px;font-size:22px;color:#333;font-weight:bold;'>Observaciones</div>
<svg class=r style='left:360px;top:1170px' width=40 height=30 viewBox='0 0 40 30'><path d='M13.9 13.4 17.6 9.9 23.8 16.2 30.3 9.9 33.8 13.4 23.8 23.1z' fill='#333'/></svg>
</body></html>
